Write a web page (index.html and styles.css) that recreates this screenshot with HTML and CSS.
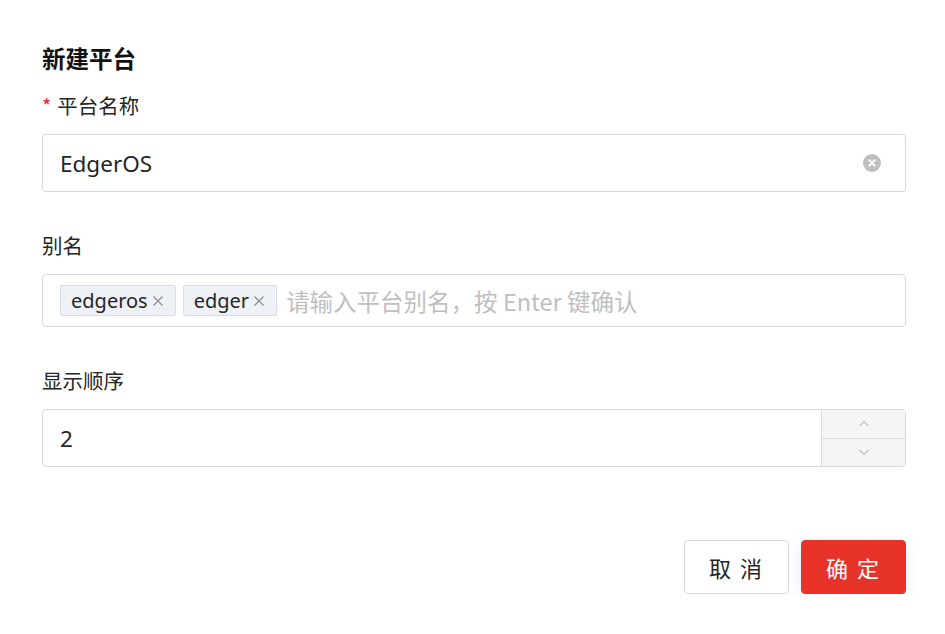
FILE: index.html
```html
<!DOCTYPE html>
<html lang="zh">
<head>
<meta charset="utf-8">
<link rel="stylesheet" href="styles.css">
</head>
<body>
<div class="dialog">
  <h1 class="title">新建平台</h1>
  <div class="field first">
    <label class="label"><span class="req">*</span>平台名称</label>
    <div class="input">
      <span class="value">EdgerOS</span>
      <span class="clear"><svg width="18" height="18" viewBox="0 0 18 18"><circle cx="9" cy="9" r="9" fill="#bfbfbf"/><path d="M6.2 6.2L11.8 11.8M11.8 6.2L6.2 11.8" stroke="#fff" stroke-width="1.8" stroke-linecap="round"/></svg></span>
    </div>
  </div>
  <div class="field">
    <label class="label">别名</label>
    <div class="input tags">
      <span class="tag">edgeros<svg class="x" width="12" height="12" viewBox="0 0 12 12"><path d="M1.5 1.5L10.5 10.5M10.5 1.5L1.5 10.5" stroke="#8c8c8c" stroke-width="1.2"/></svg></span>
      <span class="tag">edger<svg class="x" width="12" height="12" viewBox="0 0 12 12"><path d="M1.5 1.5L10.5 10.5M10.5 1.5L1.5 10.5" stroke="#8c8c8c" stroke-width="1.2"/></svg></span>
      <span class="placeholder">请输入平台别名，按 Enter 键确认</span>
    </div>
  </div>
  <div class="field">
    <label class="label">显示顺序</label>
    <div class="input number">
      <span class="value num">2</span>
      <div class="stepper">
        <div class="step"><svg width="12" height="8" viewBox="0 0 12 8"><path d="M1.5 6L6 1.5L10.5 6" fill="none" stroke="#999" stroke-width="1"/></svg></div>
        <div class="step down"><svg width="12" height="8" viewBox="0 0 12 8"><path d="M1.5 2L6 6.5L10.5 2" fill="none" stroke="#999" stroke-width="1"/></svg></div>
      </div>
    </div>
  </div>
  <div class="actions">
    <button class="btn">取 消</button>
    <button class="btn primary">确 定</button>
  </div>
</div>
</body>
</html>
```
FILE: styles.css
```css
* { box-sizing: border-box; }
html, body { margin: 0; padding: 0; background: #fff; }
body {
  font-family: "Noto Sans", "Noto Sans CJK SC", sans-serif;
  color: #262626;
}
.dialog {
  padding: 42px 39px 0 42px;
}
.title {
  margin: 0;
  font-size: 23.5px;
  font-weight: 700;
  line-height: 32px;
  color: #111;
  font-family: "Noto Sans CJK SC", sans-serif;
}
.field { margin-top: 17px; }
.field + .field { margin-top: 39px; }
.label {
  display: block;
  font-size: 20.5px;
  line-height: 28px;
  font-family: "Noto Sans CJK SC", sans-serif;
  color: #262626;
  margin-bottom: 14px;
}
.field + .field .label { margin-bottom: 15px; }
.req {
  color: #f5222d;
  margin-right: 6px;
  font-size: 20px;
}
.input {
  display: flex;
  align-items: center;
  height: 58px;
  border: 1px solid #d9d9d9;
  border-radius: 4px;
  padding: 0 17px;
  font-size: 22.5px;
}
.value { flex: 1; color: #262626; }
.clear { display: flex; margin-right: 7px; }
.tags {
  height: 53px;
  padding: 0 16px 0 17px;
  gap: 7px;
}
.tag {
  display: flex;
  align-items: center;
  height: 31px;
  padding: 0 11px 0 10px;
  background: #eef1f6;
  border: 1px solid #d9dde5;
  border-radius: 2px;
  font-size: 20px;
  color: #262626;
}
.tag .x { margin-left: 4px; }
.placeholder {
  color: #bfbfbf;
  font-size: 23.5px;
  margin-left: 2px;
  font-family: "Noto Sans CJK SC", sans-serif;
}
.number {
  padding: 0 0 0 17px;
  overflow: hidden;
}
.stepper {
  width: 84px;
  height: 100%;
  border-left: 1px solid #d9d9d9;
  background: #f5f5f5;
  display: flex;
  flex-direction: column;
}
.step {
  flex: 1;
  display: flex;
  align-items: center;
  justify-content: center;
}
.step.down { border-top: 1px solid #d9d9d9; }
.actions {
  display: flex;
  justify-content: flex-end;
  gap: 12px;
  margin-top: 73px;
}
.btn {
  height: 54px;
  width: 105px;
  border: 1px solid #d9d9d9;
  border-radius: 4px;
  background: #fff;
  color: #262626;
  font-size: 22px;
  letter-spacing: 2px;
  font-family: "Noto Sans CJK SC", sans-serif;
  cursor: pointer;
}
.btn.primary {
  background: #e8332a;
  border-color: #e8332a;
  color: #fff;
  box-shadow: 0 4px 16px rgba(60, 100, 230, 0.12);
}
```
